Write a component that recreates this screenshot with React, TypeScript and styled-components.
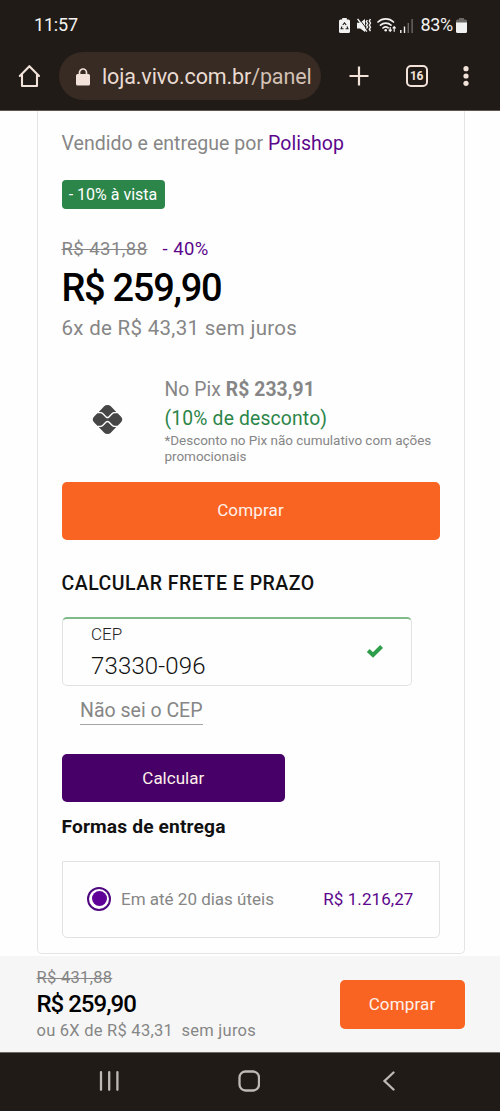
import React from "react";
import styled, { createGlobalStyle } from "styled-components";

const GlobalStyle = createGlobalStyle`
  * { box-sizing: border-box; }
  body { margin: 0; background: #fff; font-family: Roboto, "Liberation Sans", sans-serif; }
  button { font-family: inherit; border: 0; padding: 0; }
  svg { display: block; flex: none; }
`;

const Screen = styled.div`
  width: 500px;
  height: 1111px;
  overflow: hidden;
  display: flex;
  flex-direction: column;
  background: #fefefe;
`;

const Chrome = styled.header`
  flex: none;
  height: 111px;
  background: #201b17;
  border-bottom: 1px solid #62554e;
  display: flex;
  flex-direction: column;
`;

const StatusBar = styled.div`
  height: 52px;
  padding: 0 33px 2px 34px;
  display: flex;
  align-items: center;
  justify-content: space-between;
`;

const StatusGroup = styled.div`
  display: flex;
  align-items: center;
`;

const StatusIcon = styled.svg<{ $gap?: number }>`
  margin-left: ${(p) => p.$gap ?? 0}px;
`;

const BatteryText = styled.div`
  margin-left: 7px;
`;

const AddressRow = styled.div`
  height: 48px;
  display: flex;
  align-items: center;
  padding-left: 16px;
`;

const AddressPill = styled.div`
  width: 262px;
  height: 48px;
  margin-left: 15.5px;
  padding: 2px 0 0 17px;
  border-radius: 24px;
  background: #372b23;
  display: flex;
  align-items: center;
  gap: 12.5px;
`;

const TabCount = styled.div`
  width: 22px;
  height: 22px;
  margin-left: 36.5px;
  border: 2px solid #f2e2da;
  border-radius: 5px;
  color: #f2e2da;
  font-size: 12px;
  font-weight: 700;
  letter-spacing: -0.3px;
  line-height: 18px;
  text-align: center;
`;

const Line = styled.div<{
  $size: number;
  $height: number;
  $top?: number;
  $color?: string;
  $weight?: number;
  $spacing?: number;
}>`
  font-size: ${(p) => p.$size}px;
  line-height: ${(p) => p.$height}px;
  margin-top: ${(p) => p.$top ?? 0}px;
  color: ${(p) => p.$color ?? "#868686"};
  font-weight: ${(p) => p.$weight ?? 400};
  letter-spacing: ${(p) => p.$spacing ?? 0}px;
  white-space: pre;
`;

const Accent = styled.span<{ $gap?: number }>`
  color: #5c068c;
  margin-left: ${(p) => p.$gap ?? 0}px;
`;

const Path = styled.span`
  color: #d3c1b5;
`;

const Struck = styled.span`
  text-decoration: line-through;
  text-decoration-thickness: 1px;
`;

const Card = styled.main`
  flex: none;
  width: 428px;
  height: 843px;
  margin-left: 36.5px;
  padding: 20px 24px 0;
  border: 1px solid #e4e4e4;
  border-top: 0;
  border-radius: 0 0 5px 5px;
  display: flex;
  flex-direction: column;
  align-items: flex-start;
`;

const Badge = styled.div`
  height: 29px;
  width: 103px;
  margin-top: 23px;
  border-radius: 4px;
  background: #2c8549;
  color: #fff;
  font-size: 16px;
  line-height: 29px;
  text-align: center;
  white-space: nowrap;
`;

const PixRow = styled.div`
  display: flex;
  margin-top: 34px;
`;

const PixMark = styled.div`
  width: 103px;
  padding: 0 0 1px 30px;
  display: flex;
  align-items: center;
`;

const Button = styled.button<{ $w: number; $h: number; $top?: number; $bg?: string; $spacing?: number }>`
  width: ${(p) => p.$w}px;
  height: ${(p) => p.$h}px;
  margin-top: ${(p) => p.$top ?? 0}px;
  flex: none;
  border-radius: 5px;
  background: ${(p) => p.$bg ?? "#fa6423"};
  color: #fff1ea;
  font-size: 17px;
  letter-spacing: ${(p) => p.$spacing ?? 0.15}px;
`;

const BuyButton = styled(Button)`
  padding-bottom: 1px;
`;

const CepField = styled.div`
  width: 350px;
  height: 69px;
  margin-top: 21px;
  padding: 5px 26.5px 0 28.5px;
  border: 1px solid #e2e2e2;
  border-top: 2px solid #7fbb8a;
  border-radius: 5px;
  display: flex;
  justify-content: space-between;
`;

const CheckIcon = styled.svg`
  margin-top: 20px;
`;

const UnknownCep = styled.a`
  margin: 12px 0 0 18.5px;
  border-bottom: 1px solid #a4a4a4;
`;

const DeliveryOption = styled.div`
  width: 378px;
  height: 77px;
  margin-top: 22px;
  padding: 0 25px 2px 24.5px;
  border: 1px solid #e2e2e2;
  border-radius: 0 0 5px 5px;
  display: flex;
  align-items: center;
`;

const Radio = styled.span`
  width: 24px;
  height: 24px;
  margin-right: 10px;
  border: 2px solid #4f0780;
  border-radius: 50%;
  display: flex;
  align-items: center;
  justify-content: center;
  &::before {
    content: "";
    width: 15px;
    height: 15px;
    border-radius: 50%;
    background: #5f0099;
  }
`;

const Spacer = styled.div`
  flex: 1;
`;

const BuyBar = styled.footer`
  flex: none;
  height: 96px;
  margin-top: 2px;
  padding: 11px 35.5px 0 36.5px;
  background: #f6f6f6;
  display: flex;
  justify-content: space-between;
`;

const NavBar = styled.nav`
  flex: 1;
  border-top: 1px solid #6e6963;
  background: #201b17;
  display: flex;
  align-items: center;
  gap: 119px;
  padding: 0 0 2px 99px;
`;

const cream = "#f2e2da";

export default function App() {
  return (
    <Screen>
      <GlobalStyle />
      <Chrome>
        <StatusBar>
          <Line $size={18} $height={22} $color="#f4f2f0" $spacing={-0.2}>11:57</Line>
          <StatusGroup>
            <StatusIcon width="11" height="15" viewBox="0 0 11 15">
              <path d="M3.2 0h4.6v1.6H9.5A1.5 1.5 0 0 1 11 3.1v10.4A1.5 1.5 0 0 1 9.5 15h-8A1.5 1.5 0 0 1 0 13.5V3.1a1.5 1.5 0 0 1 1.5-1.5h1.7z" fill="#f1f1f1" />
              <path d="M3.8 7 5.500 4.800 7.200 7M8 8.400l.9 2.300H6.600M4.500 10.700H2.100L3 8.400" fill="none" stroke="#201b17" strokeWidth="1.1" />
            </StatusIcon>
            <StatusIcon $gap={7} width="15" height="15" viewBox="0 0 15 15">
              <path d="M0 4.8h3.200L8 1v13L3.200 10.500H0z" fill="#f1f1f1" />
              <path d="M1.600 0 11 12.600" stroke="#201b17" strokeWidth="1" />
              <path d="M.6.900 9.800 13.600" stroke="#f1f1f1" strokeWidth="1.500" />
              <path d="M10.300 2l-1 1.700 1.200 1.700-1.200 1.800 1.200 1.700-1 1.600M13.500 1l-1.200 2 1.200 2-1.200 2.200 1.200 2-1.200 2 1.200 2" fill="none" stroke="#f1f1f1" strokeWidth="1.400" />
            </StatusIcon>
            <StatusIcon $gap={5} width="20" height="16" viewBox="0 0 20 16">
              <g fill="none" stroke="#f1f1f1" strokeWidth="1.700" strokeLinecap="round">
                <path d="M1 5a11 11 0 0 1 15.500 0M3.500 8.200a7.500 7.500 0 0 1 10.500 0M6 11a4 4 0 0 1 5.200-.2" />
              </g>
              <circle cx="8.700" cy="13.200" r="1.300" fill="#f1f1f1" />
              <path d="M13.200 10v4.500M11.700 12.700l1.500 1.600 1.500-1.600M17.200 14.700v-5M15.700 11.300 17.200 9.600l1.500 1.700" fill="none" stroke="#f1f1f1" strokeWidth="1.200" />
            </StatusIcon>
            <StatusIcon $gap={3} width="13" height="15" viewBox="0 0 13 15">
              <path d="M.8 12v3M4.500 8.500V15" stroke="#f1f1f1" strokeWidth="1.400" />
              <path d="M8.300 5v10M12.100 1v14" stroke="#6c6865" strokeWidth="1.400" />
            </StatusIcon>
            <BatteryText>
              <Line $size={18} $height={22} $color="#f4f2f0" $spacing={-0.3}>83%</Line>
            </BatteryText>
            <StatusIcon $gap={3} width="11" height="15" viewBox="0 0 11 15">
              <path d="M3 0h5v1.500h1.500A1.500 1.500 0 0 1 11 3v2H0V3a1.500 1.500 0 0 1 1.500-1.500H3z" fill="#6c6865" />
              <path d="M0 4.500h11v9A1.500 1.500 0 0 1 9.500 15h-8A1.500 1.500 0 0 1 0 13.500z" fill="#f1f1f1" />
            </StatusIcon>
          </StatusGroup>
        </StatusBar>
        <AddressRow>
          <svg width="27" height="24" viewBox="0 0 27 24" fill="none" stroke={cream} strokeWidth="2.100" strokeLinejoin="round" strokeLinecap="round">
            <path d="M3.800 12 13.400 2.200l9.600 9.800M6 10.500V22h15V10.500" />
          </svg>
          <AddressPill>
            <svg width="14" height="18" viewBox="0 0 14 18">
              <path d="M3.500 8V4.500a3.500 3.500 0 0 1 7 0V8" fill="none" stroke={cream} strokeWidth="1.700" />
              <rect x="0" y="6" width="14" height="11.500" rx="1.600" fill={cream} />
            </svg>
            <Line $size={21.5} $height={28} $color="#eadbd2" $spacing={-0.13}>loja.vivo.com.br<Path>/panel</Path></Line>
          </AddressPill>
          <StatusIcon $gap={28.5} width="20" height="20" viewBox="0 0 20 20">
            <path d="M10 .5v19M.5 10h19" stroke={cream} strokeWidth="2.200" />
          </StatusIcon>
          <TabCount>16</TabCount>
          <StatusIcon $gap={35} width="6" height="22" viewBox="0 0 6 22" fill={cream}>
            <circle cx="3" cy="3.700" r="2.600" />
            <circle cx="3" cy="11" r="2.600" />
            <circle cx="3" cy="18.300" r="2.600" />
          </StatusIcon>
        </AddressRow>
      </Chrome>

      <Card>
        <Line $size={19.5} $height={26} $spacing={0.04}>
          Vendido e entregue por <Accent>Polishop</Accent>
        </Line>
        <Badge>- 10% à vista</Badge>
        <Line $size={18.5} $height={24} $top={28} $spacing={0.45}>
          <Struck>R$ 431,88</Struck>
          <Accent $gap={15}>- 40%</Accent>
        </Line>
        <Line $size={38} $height={46} $top={4} $color="#000" $weight={500} $spacing={-1.3}>R$ 259,90</Line>
        <Line $size={20.5} $height={26} $top={4} $spacing={0.3}>6x de R$ 43,31 sem juros</Line>
        <PixRow>
          <PixMark>
            <svg width="31" height="31" viewBox="0 0 30 30" fill="#464646">
              <path d="M6.500 7.700 11.800 2.200a4.500 4.500 0 0 1 6.400 0l5.300 5.500h-1.500c-1.200 0-2.300.5-3.100 1.300L15.800 12a1.200 1.200 0 0 1-1.700 0L11 9C10.200 8.200 9.200 7.700 8 7.700z" />
              <path d="M6.500 22.300l5.300 5.500a4.500 4.500 0 0 0 6.400 0l5.300-5.500h-1.500c-1.200 0-2.300-.5-3.100-1.300L15.800 18a1.200 1.200 0 0 0-1.700 0L11 21c-.8.800-1.800 1.300-3 1.300z" />
              <path d="M5.200 9H8c.8 0 1.500.3 2.100.900l3.100 3.100a2.600 2.600 0 0 0 3.600 0l3.100-3.100c.6-.6 1.300-.9 2.100-.9h2.800l3.100 3.100a4.200 4.200 0 0 1 0 5.800L24.800 21H22c-.8 0-1.500-.3-2.100-.9L16.800 17a2.600 2.600 0 0 0-3.600 0l-3.100 3.100c-.6.6-1.300.9-2.100.9H5.200l-3.100-3.100a4.200 4.200 0 0 1 0-5.800z" />
            </svg>
          </PixMark>
          <div>
            <Line $size={19.3} $height={29} $spacing={0.08}>No Pix <b>R$ 233,91</b></Line>
            <Line $size={19.3} $height={29} $color="#2c8549" $spacing={0.18}>(10% de desconto)</Line>
            <Line $size={13.5} $height={16} $top={-1} $spacing={-0.04}>{"*Desconto no Pix não cumulativo com ações\npromocionais"}</Line>
          </div>
        </PixRow>
        <BuyButton $w={378} $h={58} $top={17.5}>Comprar</BuyButton>
        <Line $size={19.5} $height={25} $top={31.5} $color="#111" $weight={500} $spacing={0.5}>CALCULAR FRETE E PRAZO</Line>
        <CepField>
          <div>
            <Line $size={17} $height={20} $color="#222" $weight={300}>CEP</Line>
            <Line $size={24} $height={28} $top={8} $color="#111" $weight={300} $spacing={0.15}>73330-096</Line>
          </div>
          <CheckIcon width="18" height="14" viewBox="0 0 18 14">
            <path d="M2.200 6.500 7 11 15.600 2.500" fill="none" stroke="#2f9e4b" strokeWidth="4" />
          </CheckIcon>
        </CepField>
        <UnknownCep>
          <Line $size={19.5} $height={26}>Não sei o CEP</Line>
        </UnknownCep>
        <Button $w={223.5} $h={48.5} $top={28.5} $bg="#470068" $spacing={0}>Calcular</Button>
        <Line $size={19.2} $height={24} $top={13} $color="#111" $weight={700} $spacing={0.14}>Formas de entrega</Line>
        <DeliveryOption>
          <Radio />
          <Line $size={17} $height={24}>Em até 20 dias úteis</Line>
          <Spacer />
          <Line $size={17} $height={24} $color="#5c068c" $spacing={0.08}>R$ 1.216,27</Line>
        </DeliveryOption>
      </Card>

      <BuyBar>
        <div>
          <Line $size={16.5} $height={22} $spacing={0.3}><Struck>R$ 431,88</Struck></Line>
          <Line $size={24} $height={28} $top={1} $color="#000" $weight={500} $spacing={-1}>R$ 259,90</Line>
          <Line $size={16.5} $height={22} $top={2} $spacing={0.24}>{"ou 6X de R$ 43,31  sem juros"}</Line>
        </div>
        <Button $w={125} $h={48.5} $top={13}>Comprar</Button>
      </BuyBar>

      <NavBar>
        <svg width="20" height="20" viewBox="0 0 20 20" stroke="#bdb9b5" strokeWidth="2.300" strokeLinecap="round">
          <path d="M2 1.200v17.600M10.200 1.200v17.600M18.400 1.200v17.600" />
        </svg>
        <svg width="22" height="22" viewBox="0 0 22 22" fill="none" stroke="#bdb9b5" strokeWidth="2.300">
          <rect x="1.500" y="1.500" width="19.500" height="19" rx="6" />
        </svg>
        <svg width="20" height="20" viewBox="0 0 20 20" fill="none" stroke="#bdb9b5" strokeWidth="2.300" strokeLinecap="round">
          <path d="M14.500 1.500 5.500 10l9 8.500" />
        </svg>
      </NavBar>
    </Screen>
  );
}
